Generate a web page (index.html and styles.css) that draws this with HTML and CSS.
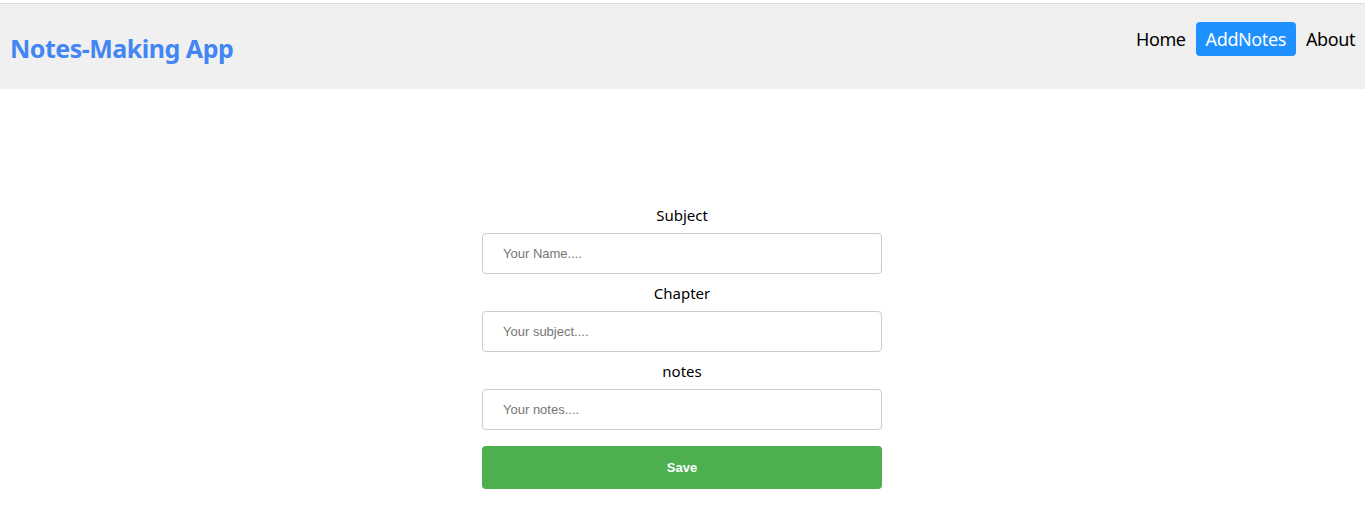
FILE: index.html
```html
<!DOCTYPE html>
<html>
<head>
<meta charset="utf-8">
<link rel="stylesheet" href="styles.css">
</head>
<body>
<div class="topline"></div>
<header class="navbar">
  <h1 class="brand">Notes-Making App</h1>
  <nav class="links">
    <a class="link">Home</a>
    <a class="link active">AddNotes</a>
    <a class="link">About</a>
  </nav>
</header>
<main class="main">
  <form class="form">
    <label class="label">Subject</label>
    <input class="field" type="text" placeholder="Your Name....">
    <label class="label">Chapter</label>
    <input class="field" type="text" placeholder="Your subject....">
    <label class="label">notes</label>
    <input class="field" type="text" placeholder="Your notes....">
    <button class="save" type="button">Save</button>
  </form>
</main>
</body>
</html>
```
FILE: styles.css
```css
* { box-sizing: border-box; }
html, body { margin: 0; padding: 0; background: #fff; }
body { font-family: "Noto Sans", "Open Sans", sans-serif; }
.topline { height: 4px; background: #fff; border-bottom: 1px solid #dadada; }
.navbar {
  height: 85px;
  background: #f0f0f0;
  display: flex;
  justify-content: space-between;
  align-items: flex-start;
  padding-left: 10px;
}
.brand {
  margin: 0;
  padding-top: 27px;
  font-size: 25px;
  line-height: 34px;
  font-weight: 700;
  color: #4285f4;
  letter-spacing: -0.5px;
}
.links { display: flex; padding-top: 18px; }
.link {
  font-size: 18px;
  line-height: 34px;
  padding: 0 10px;
  color: #000;
  border-radius: 4px;
  letter-spacing: -0.4px;
}
.link.active { background: #1e90ff; color: #fff; }
.main { display: flex; justify-content: center; padding-top: 115px; padding-right: 1px; }
.form { width: 400px; display: flex; flex-direction: column; }
.label {
  text-align: center;
  font-size: 15px;
  line-height: 22px;
  color: #000;
  margin-bottom: 7px;
}
.field {
  height: 41px;
  border: 1px solid #ccc;
  border-radius: 4px;
  padding: 0 20px;
  font-family: "Liberation Sans", Arial, sans-serif;
  font-size: 13px;
  margin: 0 0 8px 0;
}
.field::placeholder { color: #757575; }
.save {
  margin-top: 8px;
  height: 43px;
  border: none;
  border-radius: 4px;
  background: #4caf50;
  color: #fff;
  font-family: "Liberation Sans", Arial, sans-serif;
  font-size: 13px;
  font-weight: 600;
}
```
